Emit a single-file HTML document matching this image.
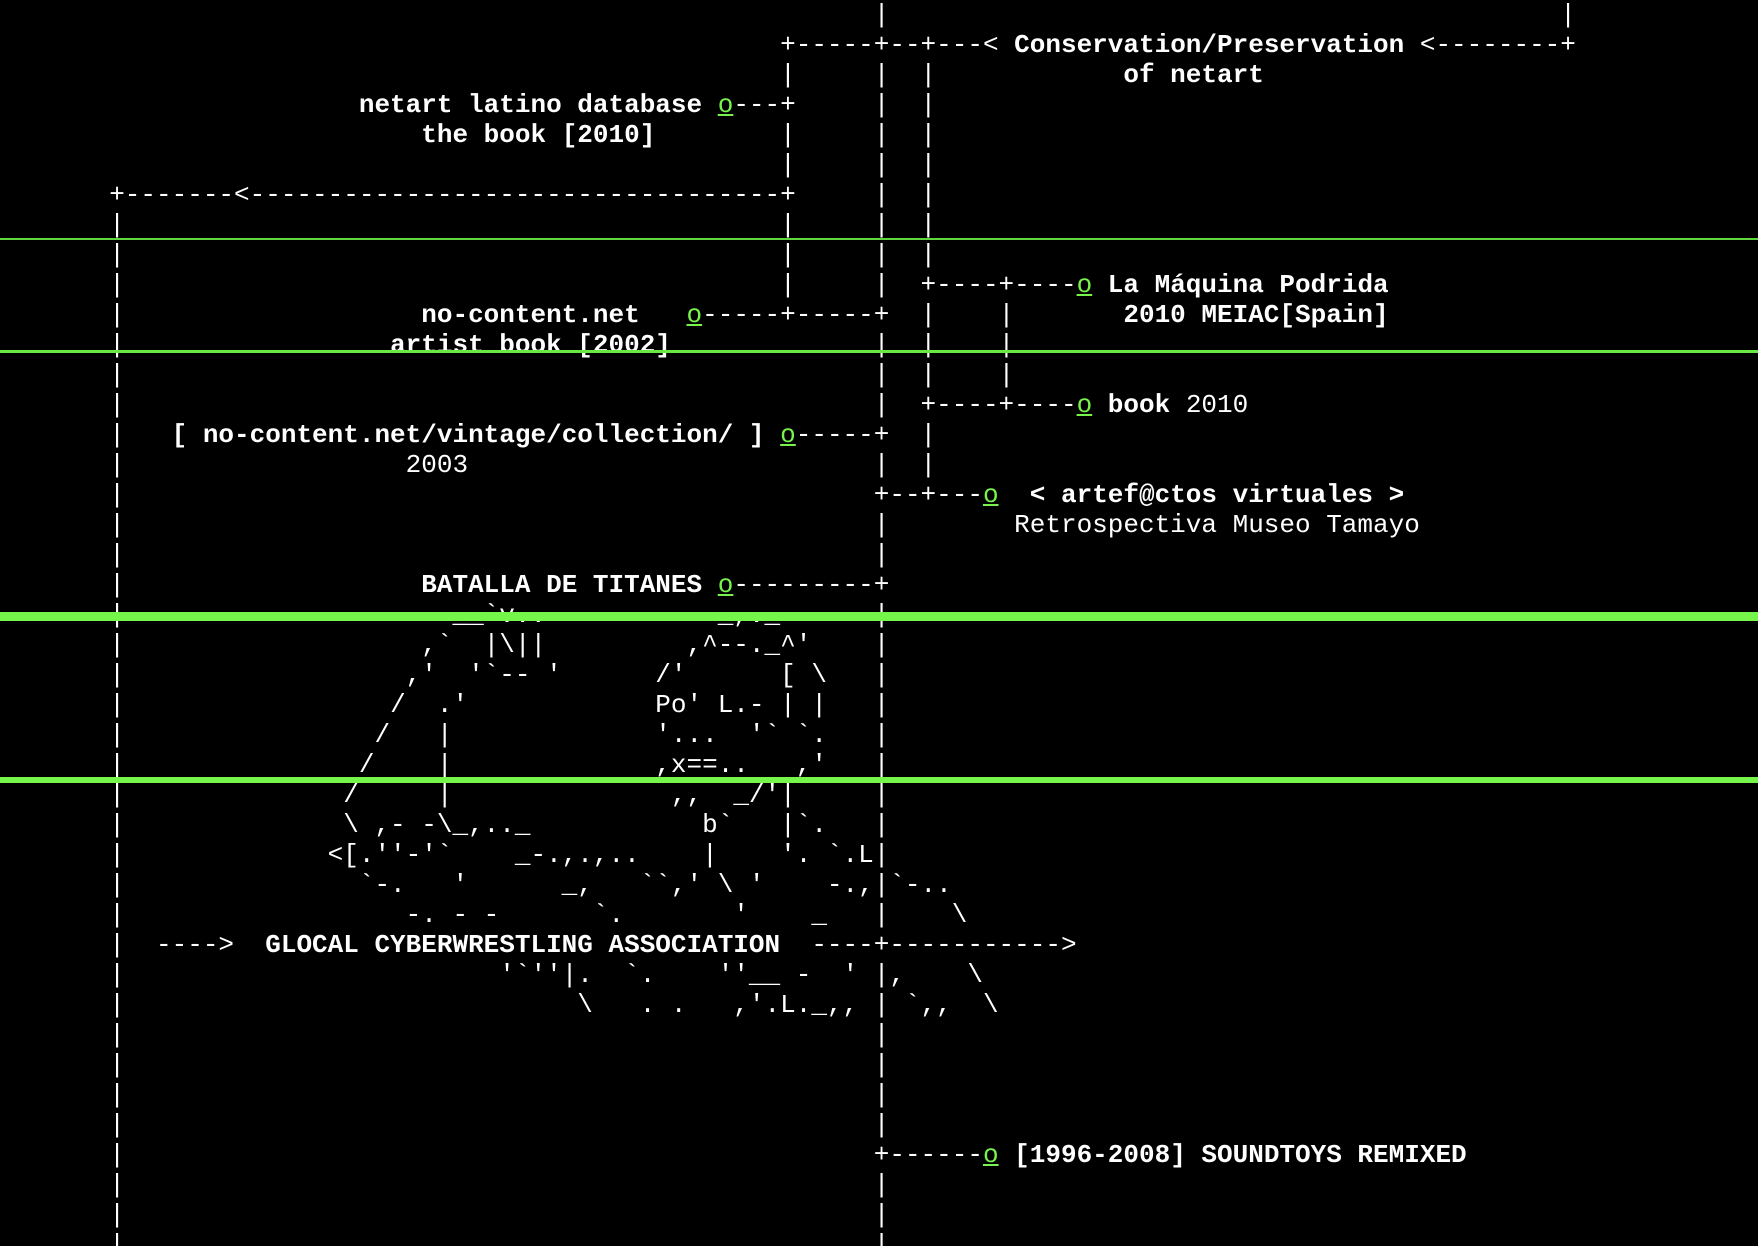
<!DOCTYPE html>
<html><head><meta charset="utf-8"><style>
html,body{margin:0;padding:0;background:#000;width:1758px;height:1246px;overflow:hidden}
body{font-family:"Liberation Mono",monospace;font-size:26px;color:#fff;position:relative}
.r{position:relative;height:30px;line-height:30px;white-space:pre}
.r span{position:absolute;top:0}
b{font-weight:bold}
i{font-style:normal;color:#78f24c;text-decoration:underline}
.g{position:absolute;left:0;width:1758px;background:#76f54a;z-index:5}
</style></head><body>
<div class="r"><span style="left:56ch">|</span><span style="left:100ch">|</span></div>
<div class="r"><span style="left:50ch">+-----+--+---&lt; <b>Conservation/Preservation</b> &lt;--------+</span></div>
<div class="r"><span style="left:50ch">|</span><span style="left:56ch">|</span><span style="left:59ch">|</span><span style="left:72ch"><b>of netart</b></span></div>
<div class="r"><span style="left:23ch"><b>netart latino database</b> <i>o</i>---+</span><span style="left:56ch">|</span><span style="left:59ch">|</span></div>
<div class="r"><span style="left:27ch"><b>the book [2010]</b></span><span style="left:50ch">|</span><span style="left:56ch">|</span><span style="left:59ch">|</span></div>
<div class="r"><span style="left:50ch">|</span><span style="left:56ch">|</span><span style="left:59ch">|</span></div>
<div class="r"><span style="left:7ch">+-------&lt;----------------------------------+</span><span style="left:56ch">|</span><span style="left:59ch">|</span></div>
<div class="r"><span style="left:7ch">|</span><span style="left:50ch">|</span><span style="left:56ch">|</span><span style="left:59ch">|</span></div>
<div class="r"><span style="left:7ch">|</span><span style="left:50ch">|</span><span style="left:56ch">|</span><span style="left:59ch">|</span></div>
<div class="r"><span style="left:7ch">|</span><span style="left:50ch">|</span><span style="left:56ch">|</span><span style="left:59ch">+----+----<i>o</i> <b>La Máquina Podrida</b></span></div>
<div class="r"><span style="left:7ch">|</span><span style="left:27ch"><b>no-content.net</b></span><span style="left:44ch"><i>o</i>-----+-----+</span><span style="left:59ch">|</span><span style="left:64ch">|</span><span style="left:72ch"><b>2010 MEIAC[Spain]</b></span></div>
<div class="r"><span style="left:7ch">|</span><span style="left:25ch"><b>artist book [2002]</b></span><span style="left:56ch">|</span><span style="left:59ch">|</span><span style="left:64ch">|</span></div>
<div class="r"><span style="left:7ch">|</span><span style="left:56ch">|</span><span style="left:59ch">|</span><span style="left:64ch">|</span></div>
<div class="r"><span style="left:7ch">|</span><span style="left:56ch">|</span><span style="left:59ch">+----+----<i>o</i> <b>book</b> 2010</span></div>
<div class="r"><span style="left:7ch">|</span><span style="left:11ch"><b>[ no-content.net/vintage/collection/ ]</b> <i>o</i>-----+</span><span style="left:59ch">|</span></div>
<div class="r"><span style="left:7ch">|</span><span style="left:26ch">2003</span><span style="left:56ch">|</span><span style="left:59ch">|</span></div>
<div class="r"><span style="left:7ch">|</span><span style="left:56ch">+--+---<i>o</i>  <b>&lt; artef@ctos virtuales &gt;</b></span></div>
<div class="r"><span style="left:7ch">|</span><span style="left:56ch">|</span><span style="left:65ch">Retrospectiva Museo Tamayo</span></div>
<div class="r"><span style="left:7ch">|</span><span style="left:56ch">|</span></div>
<div class="r"><span style="left:7ch">|</span><span style="left:27ch"><b>BATALLA DE TITANES</b> <i>o</i>---------+</span></div>
<div class="r"><span style="left:7ch">|</span><span style="left:29ch">__`v..</span><span style="left:46ch">_,._</span><span style="left:56ch">|</span></div>
<div class="r"><span style="left:7ch">|</span><span style="left:27ch">,`  |\||</span><span style="left:44ch">,^--._^'</span><span style="left:56ch">|</span></div>
<div class="r"><span style="left:7ch">|</span><span style="left:26ch">,'  '`-- '</span><span style="left:42ch">/'</span><span style="left:50ch">[ \</span><span style="left:56ch">|</span></div>
<div class="r"><span style="left:7ch">|</span><span style="left:25ch">/  .'</span><span style="left:42ch">Po' L.- | |</span><span style="left:56ch">|</span></div>
<div class="r"><span style="left:7ch">|</span><span style="left:24ch">/   |</span><span style="left:42ch">'...  '` `.</span><span style="left:56ch">|</span></div>
<div class="r"><span style="left:7ch">|</span><span style="left:23ch">/    |</span><span style="left:42ch">,x==..   ,'</span><span style="left:56ch">|</span></div>
<div class="r"><span style="left:7ch">|</span><span style="left:22ch">/     |</span><span style="left:43ch">,,  _/'|</span><span style="left:56ch">|</span></div>
<div class="r"><span style="left:7ch">|</span><span style="left:22ch">\ ,- -\_,.._</span><span style="left:45ch">b`</span><span style="left:50ch">|`.</span><span style="left:56ch">|</span></div>
<div class="r"><span style="left:7ch">|</span><span style="left:21ch">&lt;[.''-'`    _-.,.,..    |    '. `.L|</span></div>
<div class="r"><span style="left:7ch">|</span><span style="left:23ch">`-.   '      _,   ``,' \ '    -.,|`-..</span></div>
<div class="r"><span style="left:7ch">|</span><span style="left:26ch">-. - -      `.       '    _   |    \</span></div>
<div class="r"><span style="left:7ch">|</span><span style="left:10ch">----&gt;</span><span style="left:17ch"><b>GLOCAL CYBERWRESTLING ASSOCIATION</b></span><span style="left:52ch">----+-----------&gt;</span></div>
<div class="r"><span style="left:7ch">|</span><span style="left:32ch">'`''|.  `.    ''__ -  ' |,    \</span></div>
<div class="r"><span style="left:7ch">|</span><span style="left:37ch">\   . .   ,'.L._,, | `,,  \</span></div>
<div class="r"><span style="left:7ch">|</span><span style="left:56ch">|</span></div>
<div class="r"><span style="left:7ch">|</span><span style="left:56ch">|</span></div>
<div class="r"><span style="left:7ch">|</span><span style="left:56ch">|</span></div>
<div class="r"><span style="left:7ch">|</span><span style="left:56ch">|</span></div>
<div class="r"><span style="left:7ch">|</span><span style="left:56ch">+------<i>o</i> <b>[1996-2008] SOUNDTOYS REMIXED</b></span></div>
<div class="r"><span style="left:7ch">|</span><span style="left:56ch">|</span></div>
<div class="r"><span style="left:7ch">|</span><span style="left:56ch">|</span></div>
<div class="r"><span style="left:7ch">|</span><span style="left:56ch">|</span></div>
<div class="g" style="top:238px;height:2px;background:#5fd63c"></div>
<div class="g" style="top:350px;height:3px;background:#6ae844"></div>
<div class="g" style="top:612px;height:9px"></div>
<div class="g" style="top:777px;height:6px"></div>
</body></html>
